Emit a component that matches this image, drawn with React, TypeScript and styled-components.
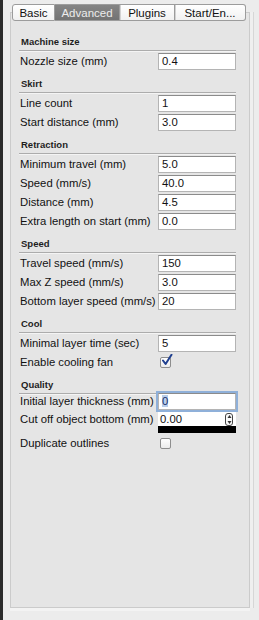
import React from "react";
import styled, { createGlobalStyle } from "styled-components";

const GlobalStyle = createGlobalStyle`
  html, body {
    margin: 0;
    padding: 0;
    background: #ececec;
  }
  body {
    font-family: "Liberation Sans", Arial, sans-serif;
  }
`;

type Field =
  | { kind: "text"; label: string; value: string; focused?: boolean }
  | { kind: "spin"; label: string; value: string }
  | { kind: "check"; label: string; checked: boolean };

interface Section {
  title: string;
  fields: Field[];
}

const sections: Section[] = [
  {
    title: "Machine size",
    fields: [{ kind: "text", label: "Nozzle size (mm)", value: "0.4" }],
  },
  {
    title: "Skirt",
    fields: [
      { kind: "text", label: "Line count", value: "1" },
      { kind: "text", label: "Start distance (mm)", value: "3.0" },
    ],
  },
  {
    title: "Retraction",
    fields: [
      { kind: "text", label: "Minimum travel (mm)", value: "5.0" },
      { kind: "text", label: "Speed (mm/s)", value: "40.0" },
      { kind: "text", label: "Distance (mm)", value: "4.5" },
      { kind: "text", label: "Extra length on start (mm)", value: "0.0" },
    ],
  },
  {
    title: "Speed",
    fields: [
      { kind: "text", label: "Travel speed (mm/s)", value: "150" },
      { kind: "text", label: "Max Z speed (mm/s)", value: "3.0" },
      { kind: "text", label: "Bottom layer speed (mm/s)", value: "20" },
    ],
  },
  {
    title: "Cool",
    fields: [
      { kind: "text", label: "Minimal layer time (sec)", value: "5" },
      { kind: "check", label: "Enable cooling fan", checked: true },
    ],
  },
  {
    title: "Quality",
    fields: [
      {
        kind: "text",
        label: "Initial layer thickness (mm)",
        value: "0",
        focused: true,
      },
      { kind: "spin", label: "Cut off object bottom (mm)", value: "0.00" },
      { kind: "check", label: "Duplicate outlines", checked: false },
    ],
  },
];

const tabs = ["Basic", "Advanced", "Plugins", "Start/En..."];
const tabWidths = [43, 65, 55, 71];

const App: React.FC = () => {
  return (
    <>
      <GlobalStyle />
      <Window>
        <TabBar>
          {tabs.map((t, i) => (
            <Tab
              key={t}
              $active={i === 1}
              $first={i === 0}
              $last={i === tabs.length - 1}
              style={{ width: tabWidths[i] }}
            >
              {t}
            </Tab>
          ))}
        </TabBar>
        <Panel>
          {sections.map((s) => (
            <SectionBlock key={s.title}>
              <Heading>{s.title}</Heading>
              {s.fields.map((f) => (
                <Row
                  key={f.label}
                  $tall={f.kind === "spin"}
                  $focused={f.kind === "text" && !!f.focused}
                >
                  <Label>{f.label}</Label>
                  {f.kind === "text" && (
                    <TextBox $focused={!!f.focused}>
                      {f.focused ? <Selected>{f.value}</Selected> : f.value}
                    </TextBox>
                  )}
                  {f.kind === "spin" && (
                    <SpinBox>
                      <span>{f.value}</span>
                      <Stepper>
                        <svg width="5" height="11" viewBox="0 0 5 11">
                          <path d="M0.5 4 L2.5 1 L4.5 4 Z" fill="#333" />
                          <path d="M0.5 7 L2.5 10 L4.5 7 Z" fill="#333" />
                        </svg>
                      </Stepper>
                    </SpinBox>
                  )}
                  {f.kind === "check" && (
                    <CheckBox>
                      {f.checked && (
                        <svg width="12" height="13" viewBox="0 0 12 13">
                          <path
                            d="M2 6.5 L4.6 10 L10.5 0.8"
                            fill="none"
                            stroke="#1f3f8f"
                            strokeWidth="2"
                            strokeLinecap="round"
                            strokeLinejoin="round"
                          />
                        </svg>
                      )}
                    </CheckBox>
                  )}
                </Row>
              ))}
            </SectionBlock>
          ))}
        </Panel>
      </Window>
    </>
  );
};

const Window = styled.div`
  width: 259px;
  height: 620px;
  box-sizing: border-box;
  border-left: 3px solid #2b2b2b;
  padding: 4px 4px 12px 7px;
  display: flex;
  flex-direction: column;
  background: #ececec;
`;

const TabBar = styled.div`
  display: flex;
  margin: 0 0 -9px 2px;
  position: relative;
  z-index: 1;
`;

const Tab = styled.div<{ $active: boolean; $first: boolean; $last: boolean }>`
  box-sizing: border-box;
  height: 17px;
  display: flex;
  align-items: center;
  justify-content: center;
  font-size: 11.5px;
  color: ${({ $active }) => ($active ? "#ececec" : "#111")};
  background: ${({ $active }) =>
    $active
      ? "linear-gradient(#858585, #737373)"
      : "linear-gradient(#ffffff, #f1f1f1)"};
  border: 1px solid #9c9c9c;
  border-left: ${({ $first }) => ($first ? "1px solid #9c9c9c" : "none")};
  border-radius: ${({ $first, $last }) =>
    $first ? "3px 0 0 3px" : $last ? "0 3px 3px 0" : "0"};
  box-shadow: ${({ $active, $first }) =>
    $active || $first ? "none" : "inset 1px 0 0 #d2d2d2"};
`;

const Panel = styled.div`
  flex: 1;
  width: 240px;
  box-sizing: border-box;
  background: #e5e5e5;
  border: 1px solid #cbcbcb;
  box-shadow: 3px 0 0 #efefef, 4px 0 0 #d6d6d6, 0 3px 0 #f3f3f3;
  padding: 22px 13px 0 9px;
  display: flex;
  flex-direction: column;
  gap: 7px;
`;

const SectionBlock = styled.div`
  display: flex;
  flex-direction: column;
  gap: 2px;
`;

const Heading = styled.div`
  font-size: 9.5px;
  font-weight: bold;
  color: #1e1e1e;
  line-height: 13px;
  padding: 0 0 2px 2px;
  margin-left: -1px;
  border-bottom: 1px solid #acacac;
  box-shadow: 0 1px 0 #f4f4f4;
`;

/* the focus ring of an active field sits over the separator line */
const Row = styled.div<{ $tall: boolean; $focused: boolean }>`
  display: grid;
  grid-template-columns: 138px 78px;
  align-items: ${({ $tall }) => ($tall ? "start" : "center")};
  height: ${({ $tall }) => ($tall ? "21px" : "17px")};
  margin-top: ${({ $focused }) => ($focused ? "-3px" : "0")};
`;

const Label = styled.div`
  font-size: 11.3px;
  color: #111;
  white-space: nowrap;
  line-height: 15px;
`;

const TextBox = styled.div<{ $focused: boolean }>`
  box-sizing: border-box;
  height: 17px;
  background: #fff;
  font-size: 11.3px;
  color: #111;
  line-height: 15px;
  padding-left: 3px;
  border: 1px solid #b4b4b4;
  border-top-color: #8b8b8b;
  box-shadow: ${({ $focused }) =>
    $focused ? "0 0 0 2px #8fb0d9" : "none"};
`;

const Selected = styled.span`
  background: #b7cdea;
  color: #1a2f6a;
`;

const SpinBox = styled.div`
  box-sizing: border-box;
  height: 21px;
  background: #fff;
  border-bottom: 7px solid #000;
  display: flex;
  align-items: center;
  justify-content: space-between;
  font-size: 11.3px;
  color: #111;
  padding-left: 2px;
`;

const Stepper = styled.div`
  box-sizing: border-box;
  width: 8px;
  height: 13px;
  margin-right: 3px;
  border: 1px solid #444;
  border-radius: 3px;
  background: #fafafa;
  display: flex;
  align-items: center;
  justify-content: center;
`;

const CheckBox = styled.div`
  box-sizing: border-box;
  width: 11px;
  height: 11px;
  margin-left: 2px;
  background: linear-gradient(#ffffff, #ececec);
  border: 1px solid #8e8e8e;
  border-radius: 2px;
  position: relative;

  svg {
    position: absolute;
    left: 0;
    top: -4px;
  }
`;

export default App;
